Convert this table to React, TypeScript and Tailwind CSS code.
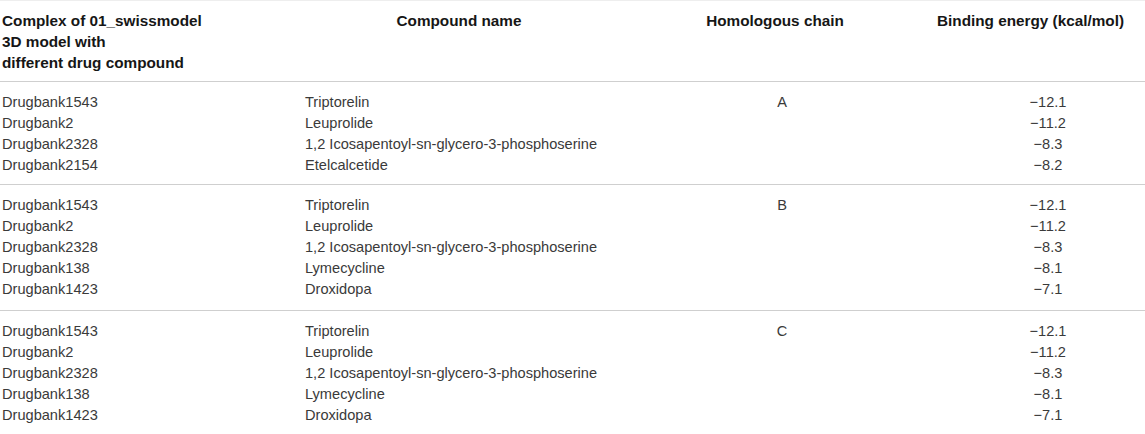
const groups = [
  {
    chain: "A",
    rows: [
      ["Drugbank1543", "Triptorelin", "−12.1"],
      ["Drugbank2", "Leuprolide", "−11.2"],
      ["Drugbank2328", "1,2 Icosapentoyl-sn-glycero-3-phosphoserine", "−8.3"],
      ["Drugbank2154", "Etelcalcetide", "−8.2"],
    ],
  },
  {
    chain: "B",
    rows: [
      ["Drugbank1543", "Triptorelin", "−12.1"],
      ["Drugbank2", "Leuprolide", "−11.2"],
      ["Drugbank2328", "1,2 Icosapentoyl-sn-glycero-3-phosphoserine", "−8.3"],
      ["Drugbank138", "Lymecycline", "−8.1"],
      ["Drugbank1423", "Droxidopa", "−7.1"],
    ],
  },
  {
    chain: "C",
    rows: [
      ["Drugbank1543", "Triptorelin", "−12.1"],
      ["Drugbank2", "Leuprolide", "−11.2"],
      ["Drugbank2328", "1,2 Icosapentoyl-sn-glycero-3-phosphoserine", "−8.3"],
      ["Drugbank138", "Lymecycline", "−8.1"],
      ["Drugbank1423", "Droxidopa", "−7.1"],
    ],
  },
];

const cols = "grid grid-cols-[305px_308px_324px_208px]";

export default function App() {
  return (
    <div className="w-[1145px] h-[434px] bg-white font-[family-name:Liberation_Sans,Arial,sans-serif] text-[14.6px] leading-[21px]">
      <div className={`${cols} border-t border-[#eeeeee] border-b border-b-[#cfcfcf] pt-[9px] pb-[8px] font-bold text-[15.3px] text-[#161616] whitespace-nowrap`}>
        <div className="pl-[2px]">
          Complex of 01_swissmodel
          <br />
          3D model with
          <br />
          different drug compound
        </div>
        <div className="text-center">Compound name</div>
        <div className="text-center">Homologous chain</div>
        <div className="text-right pr-[23px]">Binding energy (kcal/mol)</div>
      </div>
      {groups.map((g, gi) => (
        <div
          key={gi}
          className={`${cols} pt-[10px] text-[#3a3a3a] border-b ${gi === 2 ? "pb-[8px] border-[#ececec]" : gi === 1 ? "pb-[10px] border-[#cfcfcf]" : "pb-[8px] border-[#cfcfcf]"}`}
        >
          {g.rows.map((r, ri) => (
            <div key={ri} className="contents">
              <div className="pl-[2px]">{r[0]}</div>
              <div>{r[1]}</div>
              <div className="text-center pl-[14px]">{ri === 0 ? g.chain : ""}</div>
              <div className="text-center pl-[14px]">{r[2]}</div>
            </div>
          ))}
        </div>
      ))}
    </div>
  );
}
